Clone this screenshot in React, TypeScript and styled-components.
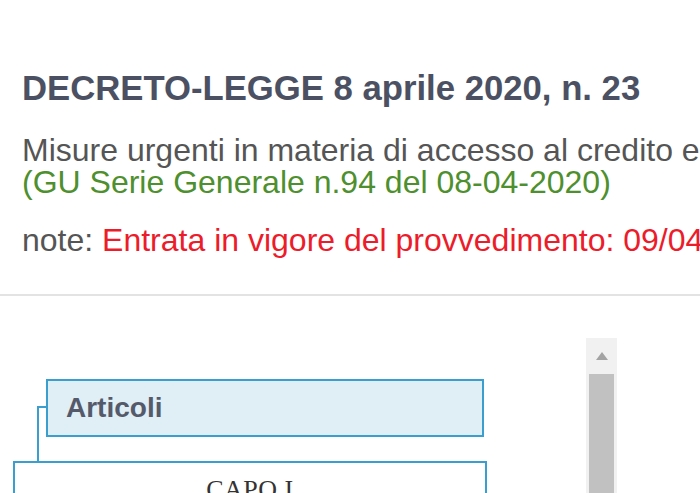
import styled, { createGlobalStyle } from "styled-components";

const GlobalStyle = createGlobalStyle`
  html, body {
    margin: 0;
    padding: 0;
    background: #ffffff;
    overflow: hidden;
  }
  body {
    font-family: "Liberation Sans", Arial, sans-serif;
  }
`;

const Page = styled.div`
  width: 700px;
  height: 493px;
  overflow: hidden;
`;

const Header = styled.header`
  padding: 68px 0 38px 22px;
  border-bottom: 2px solid #e3e3e3;
  white-space: nowrap;
  overflow: hidden;
`;

const Title = styled.h1`
  margin: 0 0 26px;
  font-size: 34.7px;
  line-height: 40px;
  font-weight: bold;
  color: #4b5163;
`;

const Line = styled.p<{ $gap?: number }>`
  margin: 0;
  margin-top: ${(p) => p.$gap ?? 0}px;
  font-size: 32px;
  line-height: 32px;
  color: #555555;
`;

const Green = styled.span`
  color: #4e8f2e;
`;

const Red = styled.span`
  color: #ec1c2a;
`;

const Body = styled.div`
  display: flex;
  align-items: flex-start;
`;

const Tree = styled.div`
  width: 586px;
  padding-top: 83px;
  display: flex;
  flex-direction: column;
  gap: 24px;
`;

const Node = styled.div<{ $indent: number; $width: number; $head?: boolean }>`
  position: relative;
  box-sizing: border-box;
  margin-left: ${(p) => p.$indent}px;
  width: ${(p) => p.$width}px;
  height: 58px;
  border: 2px solid #3a9fcf;
  background: ${(p) => (p.$head ? "#e0eef5" : "#ffffff")};
`;

const Articoli = styled(Node)`
  display: flex;
  align-items: center;
  padding-left: 18px;
  font-size: 28px;
  font-weight: bold;
  color: #555a6b;

  &::before {
    content: "";
    position: absolute;
    left: -11px;
    top: 25px;
    width: 9px;
    height: 57px;
    border-top: 2px solid #3a9fcf;
    border-left: 2px solid #3a9fcf;
  }
`;

const Capo = styled(Node)`
  text-align: center;
  padding-top: 12px;
  font-family: "Liberation Serif", "Times New Roman", serif;
  font-size: 26px;
  color: #333333;
  letter-spacing: 0.5px;
`;

const ScrollBar = styled.div`
  margin-top: 42px;
  width: 31px;
  height: 200px;
  background: #f1f1f1;
  display: flex;
  flex-direction: column;
  align-items: center;
`;

const ArrowButton = styled.div`
  height: 36px;
  width: 100%;
  display: flex;
  align-items: center;
  justify-content: center;
`;

const Thumb = styled.div`
  width: 25px;
  flex: 1;
  background: #c1c1c1;
`;

export default function App() {
  return (
    <Page>
      <GlobalStyle />
      <Header>
        <Title>DECRETO-LEGGE 8 aprile 2020, n. 23</Title>
        <Line $gap={1}>Misure urgenti in materia di accesso al credito e di adempimenti fiscali per le imprese</Line>
        <Line>
          <Green>(GU Serie Generale n.94 del 08-04-2020)</Green>
        </Line>
        <Line $gap={26}>
          note: <Red>Entrata in vigore del provvedimento: 09/04/2020</Red>
        </Line>
      </Header>
      <Body>
        <Tree>
          <Articoli $indent={46} $width={438} $head>
            Articoli
          </Articoli>
          <Capo $indent={13} $width={474}>
            CAPO I
          </Capo>
        </Tree>
        <ScrollBar>
          <ArrowButton>
            <svg width="12" height="8" viewBox="0 0 12 8">
              <path d="M6 0 L12 8 L0 8 Z" fill="#a3a3a3" />
            </svg>
          </ArrowButton>
          <Thumb />
        </ScrollBar>
      </Body>
    </Page>
  );
}
